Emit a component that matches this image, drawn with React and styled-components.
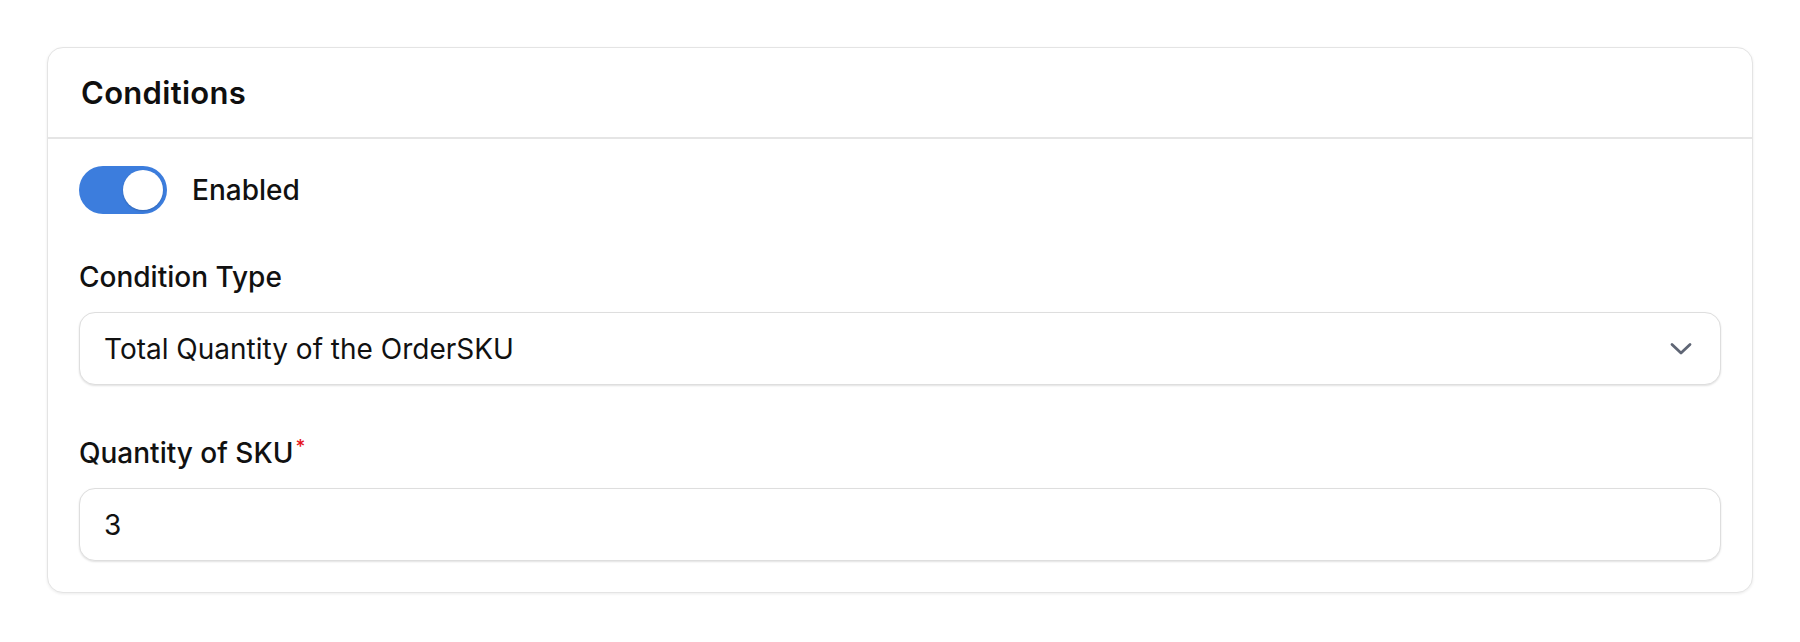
import React from "react";
import styled, { createGlobalStyle } from "styled-components";

const GlobalStyle = createGlobalStyle`
  html, body {
    margin: 0;
    padding: 0;
    background: #ffffff;
  }
  body {
    font-family: "Inter", "Noto Sans", sans-serif;
    color: #111111;
  }
`;

const Page = styled.div`
  padding: 47px;
  box-sizing: border-box;
  width: 1800px;
  height: 642px;
`;

const Card = styled.section`
  background: #ffffff;
  border: 1px solid #e4e4e4;
  border-radius: 16px;
  box-shadow: 0 1px 3px rgba(0, 0, 0, 0.08);
  overflow: hidden;
`;

const Header = styled.header`
  height: 89px;
  display: flex;
  align-items: center;
  padding: 0 33px;
  border-bottom: 2px solid #e5e5e5;
`;

const Title = styled.h2`
  margin: 0;
  font-size: 31px;
  font-weight: 600;
  letter-spacing: 0.3px;
  color: #0f0f0f;
`;

const Body = styled.div`
  display: flex;
  flex-direction: column;
  padding: 27px 31px 31px;
`;

const ToggleRow = styled.label`
  display: flex;
  align-items: center;
  gap: 25px;
  height: 48px;
  font-size: 28px;
  font-weight: 500;
`;

const Track = styled.span`
  position: relative;
  flex: none;
  width: 88px;
  height: 48px;
  border-radius: 24px;
  background: ${(p) => (p.$on ? "#3c7ddd" : "#d1d5db")};
`;

const Knob = styled.span`
  position: absolute;
  top: 4px;
  left: ${(p) => (p.$on ? "44px" : "4px")};
  width: 40px;
  height: 40px;
  border-radius: 50%;
  background: #ffffff;
  box-shadow: 0 1px 2px rgba(0, 0, 0, 0.18);
`;

const Field = styled.div`
  display: flex;
  flex-direction: column;
  margin-top: ${(p) => p.$top}px;
`;

const Label = styled.div`
  font-size: 28px;
  font-weight: 500;
  line-height: 36px;
  margin-bottom: 17px;
`;

const Required = styled.span`
  color: #e5161b;
  font-size: 19px;
  vertical-align: 10px;
  margin-left: 2px;
`;

const Control = styled.div`
  box-sizing: border-box;
  height: 73px;
  display: flex;
  align-items: center;
  justify-content: space-between;
  padding: 0 28px 0 24px;
  border: 1px solid #dedede;
  border-radius: 16px;
  background: #ffffff;
  box-shadow: 0 1px 2px rgba(0, 0, 0, 0.12);
  font-size: 28px;
  font-weight: 400;
  color: #111111;
`;

const ValueInput = styled.input`
  flex: 1;
  border: none;
  outline: none;
  padding: 0;
  background: transparent;
  font-family: "Inter", "Noto Sans", sans-serif;
  font-size: 28px;
  color: #111111;
`;

const Chevron = () => (
  <svg width="22" height="14" viewBox="0 0 22 14" fill="none">
    <polyline
      points="2,2.5 11,11 20,2.5"
      stroke="#5f6675"
      strokeWidth="2.8"
      strokeLinecap="round"
      strokeLinejoin="round"
    />
  </svg>
);

export default function App() {
  return (
    <Page>
      <GlobalStyle />
      <Card>
        <Header>
          <Title>Conditions</Title>
        </Header>
        <Body>
          <ToggleRow>
            <Track $on>
              <Knob $on />
            </Track>
            Enabled
          </ToggleRow>

          <Field $top={45}>
            <Label>Condition Type</Label>
            <Control>
              <span>Total Quantity of the OrderSKU</span>
              <Chevron />
            </Control>
          </Field>

          <Field $top={44}>
            <Label>
              Quantity of SKU<Required>*</Required>
            </Label>
            <Control>
              <ValueInput defaultValue="3" />
            </Control>
          </Field>
        </Body>
      </Card>
    </Page>
  );
}
